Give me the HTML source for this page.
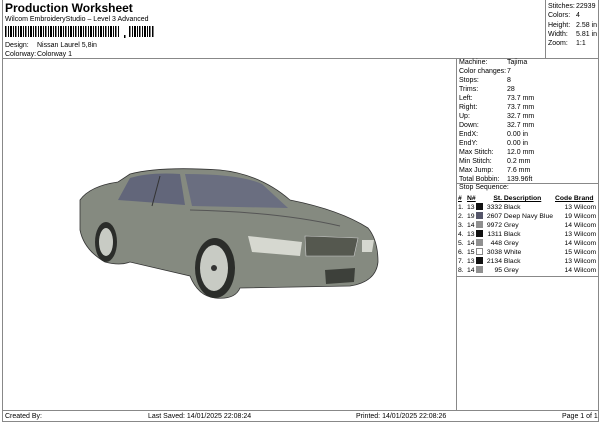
<!DOCTYPE html>
<html><head><meta charset="utf-8"><style>
*{margin:0;padding:0;box-sizing:border-box}
body{width:600px;height:424px;background:#fff;font-family:"Liberation Sans",Arial,sans-serif;color:#000;position:relative;overflow:hidden;font-size:7px}
.a{position:absolute;white-space:nowrap}
.l{position:absolute;background:#888}
.sw{display:inline-block;width:7px;height:7px;vertical-align:-1px}
table{border-collapse:collapse;table-layout:fixed}
td{padding:0;height:9px;line-height:9px;font-size:6.8px;white-space:nowrap;overflow:hidden}
</style></head><body>
<div class="l" style="left:2px;top:0;width:1px;height:422px"></div>
<div class="l" style="left:598px;top:0;width:1px;height:422px"></div>
<div class="l" style="left:2px;top:421px;width:597px;height:1px"></div>
<div class="l" style="left:2px;top:58px;width:597px;height:1px"></div>
<div class="l" style="left:545px;top:0;width:1px;height:58px"></div>
<div class="l" style="left:456px;top:58px;width:1px;height:352px"></div>
<div class="l" style="left:2px;top:410px;width:597px;height:1px"></div>
<div class="l" style="left:456px;top:183px;width:143px;height:1px"></div>
<div class="l" style="left:456px;top:276px;width:143px;height:1px"></div>

<div class="a" style="left:5px;top:1px;font-size:12px;font-weight:bold">Production Worksheet</div>
<div class="a" style="left:5px;top:16px">Wilcom EmbroideryStudio – Level 3 Advanced</div>
<svg class="a" style="left:5px;top:26px" width="150" height="12">
<g fill="#000">
<rect x="0" y="0" width="1.5" height="11"/><rect x="3" y="0" width="1" height="11"/><rect x="5" y="0" width="2" height="11"/><rect x="8" y="0" width="1" height="11"/><rect x="10" y="0" width="1.5" height="11"/><rect x="13" y="0" width="1" height="11"/><rect x="15" y="0" width="2" height="11"/><rect x="18" y="0" width="1" height="11"/><rect x="20" y="0" width="1.5" height="11"/><rect x="23" y="0" width="1" height="11"/><rect x="25" y="0" width="2" height="11"/><rect x="28" y="0" width="1" height="11"/><rect x="30" y="0" width="1.5" height="11"/><rect x="33" y="0" width="1" height="11"/><rect x="35" y="0" width="2" height="11"/><rect x="38" y="0" width="1" height="11"/><rect x="40" y="0" width="1.5" height="11"/><rect x="43" y="0" width="1" height="11"/><rect x="45" y="0" width="2" height="11"/><rect x="48" y="0" width="1" height="11"/><rect x="50" y="0" width="1.5" height="11"/><rect x="53" y="0" width="1" height="11"/><rect x="55" y="0" width="2" height="11"/><rect x="58" y="0" width="1" height="11"/><rect x="60" y="0" width="1.5" height="11"/><rect x="63" y="0" width="1" height="11"/><rect x="65" y="0" width="2" height="11"/><rect x="68" y="0" width="1" height="11"/><rect x="70" y="0" width="1.5" height="11"/><rect x="73" y="0" width="1" height="11"/><rect x="75" y="0" width="2" height="11"/><rect x="78" y="0" width="1" height="11"/><rect x="80" y="0" width="1.5" height="11"/><rect x="83" y="0" width="1" height="11"/><rect x="85" y="0" width="2" height="11"/><rect x="88" y="0" width="1" height="11"/><rect x="90" y="0" width="1.5" height="11"/><rect x="93" y="0" width="1" height="11"/><rect x="95" y="0" width="2" height="11"/><rect x="98" y="0" width="1" height="11"/><rect x="100" y="0" width="1.5" height="11"/><rect x="103" y="0" width="1" height="11"/><rect x="105" y="0" width="2" height="11"/><rect x="108" y="0" width="1" height="11"/><rect x="110" y="0" width="1.5" height="11"/><rect x="113" y="0" width="1" height="11"/><rect x="119" y="9" width="1.5" height="3"/><rect x="124" y="0" width="1.5" height="11"/><rect x="127" y="0" width="1" height="11"/><rect x="129" y="0" width="2" height="11"/><rect x="132" y="0" width="1" height="11"/><rect x="134" y="0" width="1.5" height="11"/><rect x="137" y="0" width="1" height="11"/><rect x="139" y="0" width="2" height="11"/><rect x="142" y="0" width="1" height="11"/><rect x="144" y="0" width="1.5" height="11"/><rect x="147" y="0" width="1.5" height="11"/>
</g></svg>
<div class="a" style="left:5px;top:42px">Design:</div><div class="a" style="left:37px;top:42px">Nissan Laurel 5,8in</div>
<div class="a" style="left:5px;top:51px">Colorway:</div><div class="a" style="left:37px;top:51px">Colorway 1</div>

<div class="a" style="left:548px;top:2px;line-height:9.3px">Stitches:<br>Colors:<br>Height:<br>Width:<br>Zoom:</div>
<div class="a" style="left:576px;top:2px;line-height:9.3px">22939<br>4<br>2.58 in<br>5.81 in<br>1:1</div>

<div class="a" style="left:459px;top:58px;line-height:9px">Machine:<br>Color changes:<br>Stops:<br>Trims:<br>Left:<br>Right:<br>Up:<br>Down:<br>EndX:<br>EndY:<br>Max Stitch:<br>Min Stitch:<br>Max Jump:<br>Total Bobbin:</div>
<div class="a" style="left:507px;top:58px;line-height:9px">Tajima<br>7<br>8<br>28<br>73.7 mm<br>73.7 mm<br>32.7 mm<br>32.7 mm<br>0.00 in<br>0.00 in<br>12.0 mm<br>0.2 mm<br>7.6 mm<br>139.96ft</div>

<div class="a" style="left:459px;top:184px">Stop Sequence:</div>
<table class="a" style="left:458px;top:194px;width:139px">
<colgroup><col style="width:9px"><col style="width:9px"><col style="width:10px"><col style="width:16px"><col style="width:52px"><col style="width:18px"><col style="width:25px"></colgroup>
<tr style="font-weight:bold;text-decoration:underline"><td>#</td><td>N#</td><td></td><td style="text-align:right">St.</td><td>&nbsp;Description</td><td style="text-align:right">Code</td><td>&nbsp;Brand</td></tr>
<tr><td>1.</td><td>13</td><td><span class="sw" style="background:#111"></span></td><td style="text-align:right">3332</td><td>&nbsp;Black</td><td style="text-align:right">13</td><td>&nbsp;Wilcom</td></tr>
<tr><td>2.</td><td>19</td><td><span class="sw" style="background:#55566a"></span></td><td style="text-align:right">2607</td><td>&nbsp;Deep Navy Blue</td><td style="text-align:right">19</td><td>&nbsp;Wilcom</td></tr>
<tr><td>3.</td><td>14</td><td><span class="sw" style="background:#909090"></span></td><td style="text-align:right">9972</td><td>&nbsp;Grey</td><td style="text-align:right">14</td><td>&nbsp;Wilcom</td></tr>
<tr><td>4.</td><td>13</td><td><span class="sw" style="background:#111"></span></td><td style="text-align:right">1311</td><td>&nbsp;Black</td><td style="text-align:right">13</td><td>&nbsp;Wilcom</td></tr>
<tr><td>5.</td><td>14</td><td><span class="sw" style="background:#909090"></span></td><td style="text-align:right">448</td><td>&nbsp;Grey</td><td style="text-align:right">14</td><td>&nbsp;Wilcom</td></tr>
<tr><td>6.</td><td>15</td><td><span class="sw" style="background:#fff;border:1px solid #888"></span></td><td style="text-align:right">3038</td><td>&nbsp;White</td><td style="text-align:right">15</td><td>&nbsp;Wilcom</td></tr>
<tr><td>7.</td><td>13</td><td><span class="sw" style="background:#111"></span></td><td style="text-align:right">2134</td><td>&nbsp;Black</td><td style="text-align:right">13</td><td>&nbsp;Wilcom</td></tr>
<tr><td>8.</td><td>14</td><td><span class="sw" style="background:#909090"></span></td><td style="text-align:right">95</td><td>&nbsp;Grey</td><td style="text-align:right">14</td><td>&nbsp;Wilcom</td></tr>
</table>

<svg class="a" style="left:0;top:0" width="456" height="410">
<path d="M80,200 Q90,186 118,182 L130,174 Q160,166 220,170 Q260,174 290,200 Q340,210 368,228 Q378,240 378,262 Q376,282 350,286 L240,288 Q235,300 215,298 Q198,296 190,276 L130,262 Q120,266 105,262 Q84,250 80,230 Z" fill="#858a80" stroke="#333" stroke-width="0.8"/>
<path d="M118,200 L130,178 Q150,172 180,174 L185,205 Z" fill="#62667a"/>
<path d="M185,174 Q240,174 262,184 L288,208 L192,206 Z" fill="#6a6e80"/>
<path d="M160,176 L152,206" stroke="#333" stroke-width="1"/>
<path d="M190,210 Q280,212 340,226" stroke="#555" fill="none"/>
<path d="M248,236 L302,242 L300,256 L252,252 Z" fill="#d6d8d0"/>
<path d="M305,236 L358,238 L354,256 L306,256 Z" fill="#55584f" stroke="#ccc" stroke-width="0.6"/>
<path d="M362,240 L374,240 L372,252 L362,252 Z" fill="#d6d8d0"/>
<path d="M325,270 L355,268 L354,282 L326,284 Z" fill="#3d403a"/>
<ellipse cx="215" cy="268" rx="20" ry="30" fill="#2b2d2a"/>
<ellipse cx="214" cy="268" rx="14" ry="23" fill="#c8cbc4"/>
<circle cx="214" cy="268" r="3" fill="#333"/>
<ellipse cx="106" cy="242" rx="11" ry="20" fill="#2b2d2a"/>
<ellipse cx="106" cy="242" rx="7" ry="14" fill="#c8cbc4"/>
</svg>

<div class="a" style="left:5px;top:413px">Created By:</div>
<div class="a" style="left:148px;top:413px">Last Saved: 14/01/2025 22:08:24</div>
<div class="a" style="left:356px;top:413px">Printed: 14/01/2025 22:08:26</div>
<div class="a" style="left:562px;top:413px">Page 1 of 1</div>
</body></html>
